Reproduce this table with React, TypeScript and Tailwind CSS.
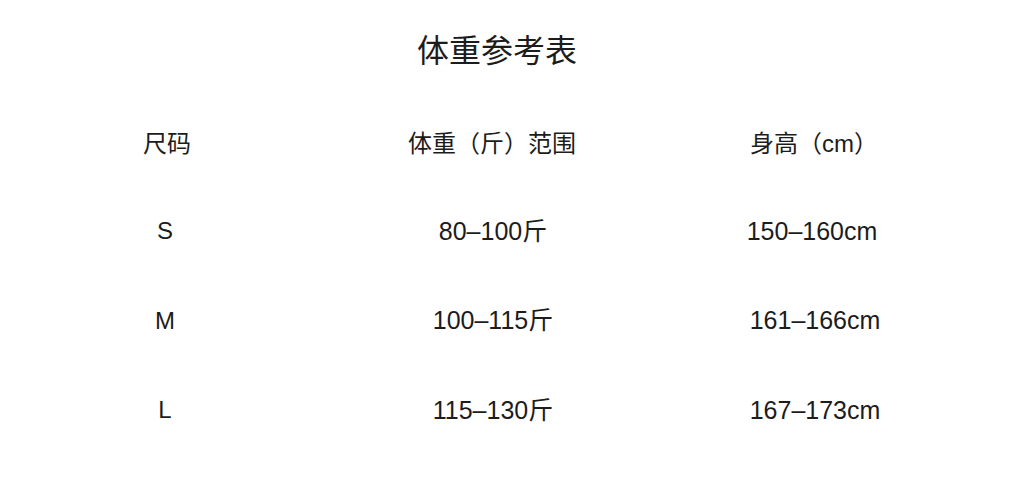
const rows = [
  { size: "S", weight: "80–100斤", height: "150–160cm", h: "h-[90px]", shift: "pl-0" },
  { size: "M", weight: "100–115斤", height: "161–166cm", h: "h-[89px]", shift: "pl-[6px]" },
  { size: "L", weight: "115–130斤", height: "167–173cm", h: "h-[90px]", shift: "pl-[6px]" },
];

const App = () => {
  return (
    <div
      className="w-[1024px] h-[492px] bg-white text-[#1c1c1c] overflow-hidden"
      style={{ fontFamily: '"Liberation Sans", "Noto Sans CJK SC", sans-serif' }}
    >
      <div className="h-[102px] flex items-center justify-center">
        <h1 className="text-[32px] leading-none font-normal mr-[30px]">体重参考表</h1>
      </div>

      <div className="grid grid-cols-[334px_316px_324px] h-[84px] items-center text-[24px] leading-none">
        <div className="text-center">尺码</div>
        <div className="text-center">体重（斤）范围</div>
        <div className="text-center pl-[4px]">身高（cm）</div>
      </div>

      {rows.map((r) => (
        <div
          key={r.size}
          className={`grid grid-cols-[334px_316px_324px] items-center text-[25px] leading-none ${r.h}`}
        >
          <div className="text-center pr-[4px] text-[24px]">{r.size}</div>
          <div className="text-center pl-[2px]">{r.weight}</div>
          <div className={`text-center ${r.shift}`}>{r.height}</div>
        </div>
      ))}
    </div>
  );
};

export default App;
